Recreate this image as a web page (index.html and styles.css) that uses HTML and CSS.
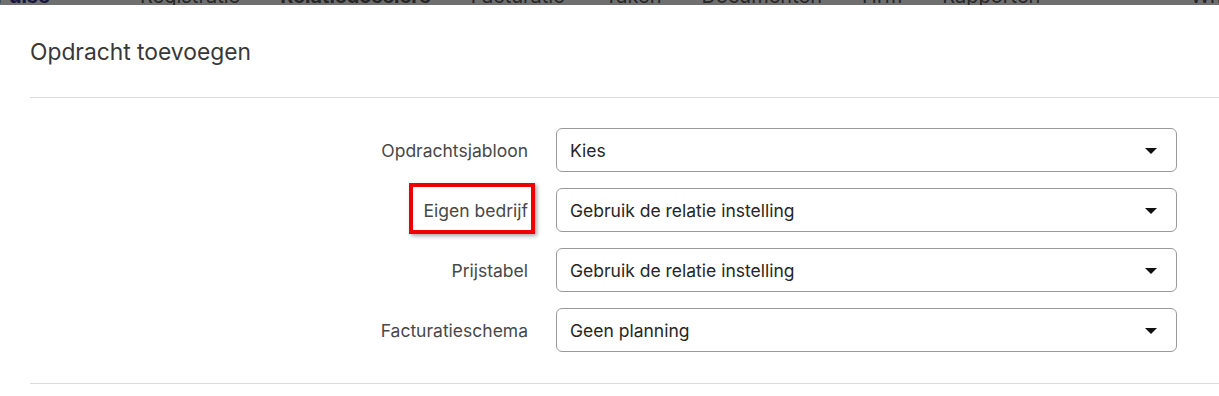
FILE: index.html
```html
<!DOCTYPE html>
<html lang="nl">
<head>
    <meta charset="UTF-8">
    <meta name="viewport" content="width=device-width, initial-scale=1.0">
    <title>Opdracht toevoegen</title>
    <link rel="stylesheet" href="styles.css">
</head>
<body>

    <!-- navigation behind the modal, only its bottom edge peeks out -->
    <div class="topbar">
        <div class="topbar-inner">
            <span class="brand">Pulse</span>
            <span class="nav-icon"></span>
            <span class="nav-item">Registratie</span>
            <span class="nav-item active">Relatiedossiers</span>
            <span class="nav-item">Facturatie</span>
            <span class="nav-item">Taken</span>
            <span class="nav-item">Documenten</span>
            <span class="nav-item">Hrm</span>
            <span class="nav-item">Rapporten</span>
            <span class="nav-item whats">What's new</span>
        </div>
    </div>

    <div class="modal">
        <div class="modal-header">
            <h2 class="modal-title">Opdracht toevoegen</h2>
        </div>

        <div class="modal-body">
            <div class="form-row">
                <label class="form-label">Opdrachtsjabloon</label>
                <div class="select">
                    <span>Kies</span>
                    <span class="caret"></span>
                </div>
            </div>
            <div class="form-row">
                <label class="form-label"><span class="highlight">Eigen bedrijf</span></label>
                <div class="select">
                    <span>Gebruik de relatie instelling</span>
                    <span class="caret"></span>
                </div>
            </div>
            <div class="form-row">
                <label class="form-label">Prijstabel</label>
                <div class="select">
                    <span>Gebruik de relatie instelling</span>
                    <span class="caret"></span>
                </div>
            </div>
            <div class="form-row">
                <label class="form-label">Facturatieschema</label>
                <div class="select">
                    <span>Geen planning</span>
                    <span class="caret"></span>
                </div>
            </div>
        </div>
    </div>

</body>
</html>
```

FILE: styles.css
```css
body {
    margin: 0;
    padding: 0;
    background: #fff;
    font-family: 'Inter', 'Liberation Sans', sans-serif;
    color: #333;
    overflow: hidden;
}

/* Top navigation (dimmed by the modal backdrop) */
.topbar {
    height: 5px;
    overflow: hidden;
    background: #6f6f6f;
}

.topbar-inner {
    display: flex;
    align-items: center;
    gap: 40px;
    margin-top: -15px;
    margin-left: -4px;
    font-size: 20px;
    line-height: 22px;
    color: #262626;
    white-space: nowrap;
}

.brand {
    color: #17173d;
    font-weight: 700;
}

.nav-icon {
    width: 22px;
    height: 22px;
    border-radius: 50%;
    background: #111;
    margin-left: 10px;
}

.nav-item.active {
    font-weight: 700;
}

.nav-item.whats {
    margin-left: 110px;
}

/* Modal */
.modal {
    background: #fff;
}

.modal-header {
    height: 92px;
    margin-left: 30px;
    display: flex;
    align-items: center;
    border-bottom: 1px solid #dcdcdc;
}

.modal-title {
    margin: 0;
    font-size: 22.8px;
    font-weight: 400;
    color: #383838;
}

.modal-body {
    margin-left: 30px;
    padding: 30px 42px 31px 0;
    display: flex;
    flex-direction: column;
    gap: 16px;
    border-bottom: 1px solid #dcdcdc;
}

.form-row {
    display: grid;
    grid-template-columns: 498px 1fr;
    column-gap: 28px;
    align-items: center;
}

.form-label {
    text-align: right;
    font-size: 17.5px;
    color: #484848;
}

.highlight {
    position: relative;
    display: inline-block;
    line-height: 20px;
}

/* red annotation box */
.highlight::after {
    content: "";
    position: absolute;
    top: -18px;
    bottom: -13px;
    left: -15px;
    right: -7px;
    border: 4px solid #ee0000;
    box-shadow: 2px 2px 4px rgba(0, 0, 0, 0.35);
}

.select {
    height: 44px;
    box-sizing: border-box;
    border: 1px solid #9a9a9a;
    border-radius: 6px;
    padding: 0 19px 0 13px;
    display: flex;
    align-items: center;
    justify-content: space-between;
    font-size: 17.5px;
    color: #262626;
}

.caret {
    width: 0;
    height: 0;
    border-left: 6px solid transparent;
    border-right: 6px solid transparent;
    border-top: 6px solid #111;
    margin-top: 2px;
}
```
